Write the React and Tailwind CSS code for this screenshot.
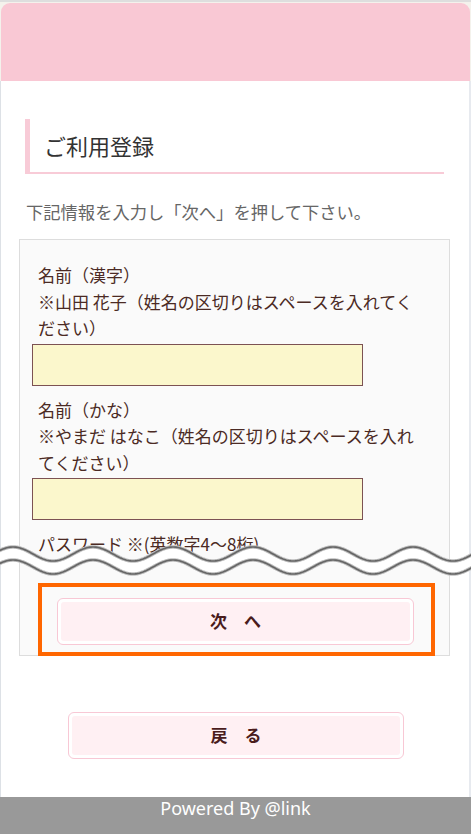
import React from 'react';

const jp = "font-['Noto_Sans_CJK_JP','Noto_Sans',sans-serif]";

function wavePath(center, amp, period, phase) {
  const pts = [];
  for (let x = -2; x <= 474; x += 1) {
    const y = center - amp * Math.cos((2 * Math.PI * (x - phase)) / period);
    pts.push([x, y]);
  }
  return pts;
}

function Snip() {
  const upper = wavePath(16, 7, 80, 13);
  const lower = wavePath(29, 7, 80, 13);
  const line = (pts) => pts.map(([x, y], i) => `${i ? 'L' : 'M'}${x} ${y.toFixed(2)}`).join(' ');
  const band =
    line(upper) +
    ' ' +
    lower
      .slice()
      .reverse()
      .map(([x, y]) => `L${x} ${y.toFixed(2)}`)
      .join(' ') +
    ' Z';

  return (
    <svg
      className="absolute left-0 top-[538px] z-20"
      width="471"
      height="44"
      viewBox="0 0 471 44"
    >
      <path d={band} fill="#ffffff" />
      <path d={line(upper)} fill="none" stroke="#bdbdbd" strokeWidth="3.6" />
      <path d={line(upper)} fill="none" stroke="#666666" strokeWidth="1.7" />
      <path d={line(lower)} fill="none" stroke="#bdbdbd" strokeWidth="3.6" />
      <path d={line(lower)} fill="none" stroke="#666666" strokeWidth="1.7" />
    </svg>
  );
}

function PinkButton({ label, className }) {
  return (
    <div className={`rounded-[6px] border border-[#f8c8d5] bg-white p-[3px] ${className}`}>
      <div className="flex h-full items-center justify-center rounded-[3px] bg-[#fff0f3] text-[17px] font-bold text-[#4a1c1c]">
        {label}
      </div>
    </div>
  );
}

function Field({ title, note }) {
  return (
    <div>
      <div className="pl-[6px] pr-[12px] text-[17px] leading-[26.5px] text-[#4b2a24]">
        {title}
        <br />
        {note}
      </div>
      <div className="mt-[2px] h-[42px] w-[331px] border border-[#7c5253] bg-[#fbf7cc]" />
    </div>
  );
}

export default function App() {
  return (
    <div className={`relative flex h-[834px] w-full flex-col overflow-hidden bg-white ${jp}`}>
      <div className="border-t-2 border-[#dedede] bg-[#f4f2ec] px-px pt-px">
        <div className="h-[78px] rounded-t-[9px] bg-[#f9c8d4]" />
      </div>

      <main className="flex-1 border-l border-[#dde1e6] border-r-2 border-r-[#e7eaef] pl-[18px] pr-[19px]">
        <h1 className="mx-[6px] mt-[38px] border-b-2 border-l-[5px] border-[#f8cbd7] pl-[14px] text-[22px] font-normal leading-[53px] text-[#333]">
          ご利用登録
        </h1>

        <p className="ml-[7px] mt-[24px] text-[17.3px] leading-[27px] text-[#666]">
          下記情報を入力し「次へ」を押して下さい。
        </p>

        <section className="mt-[14px] border border-[#dddddd] bg-[#fafafa] px-[12px] pt-[22px]">
          <Field title="名前（漢字）" note="※山田 花子（姓名の区切りはスペースを入れてください）" />
          <div className="mt-[11px]">
            <Field title="名前（かな）" note="※やまだ はなこ（姓名の区切りはスペースを入れてください）" />
          </div>
          <div className="mt-[11px] pl-[6px] text-[17px] leading-[26.5px] text-[#4b2a24]">
            パスワード ※(英数字4～8桁)
          </div>

          <div className="relative z-10 mb-[-1px] ml-[6px] mt-[25px] w-[397px] border-4 border-[#ff6600] pb-[7px] pl-[15px] pt-[11px]">
            <PinkButton label="次　へ" className="h-[47px] w-[357px]" />
          </div>
        </section>

        <PinkButton label="戻　る" className="ml-[49px] mt-[56px] h-[47px] w-[336px]" />
      </main>

      <footer className="h-[37px] bg-[#999999] text-center font-['Noto_Sans',sans-serif] text-[18px] leading-[23px] text-white">
        Powered By @link
      </footer>

      <Snip />
    </div>
  );
}
